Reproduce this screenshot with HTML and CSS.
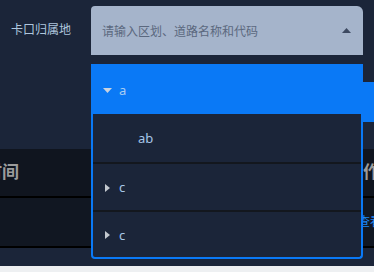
FILE: index.html
```html
<!DOCTYPE html>
<html lang="zh-CN">
<head>
    <meta charset="UTF-8">
    <title>卡口查询</title>
    <link rel="stylesheet" href="styles.css">
</head>
<body>
    <div class="page">
        <div class="filter">
            <div class="filter-label">卡口归属地</div>
            <div class="select">
                <span class="placeholder">请输入区划、道路名称和代码</span>
                <svg class="arrow" width="9" height="5" viewBox="0 0 9 5"><polygon points="0,5 4.5,0 9,5" fill="#3c4961"/></svg>
            </div>
        </div>

        <div class="table">
            <div class="thead">
                <div class="th th-time">时间</div>
                <div class="th th-op">操作</div>
            </div>
            <div class="tr">
                <div class="td"></div>
                <div class="td td-op">查看</div>
            </div>
        </div>
        <div class="footer"></div>

        <!-- button peeking out from behind the dropdown -->
        <div class="side-btn"></div>

        <!-- tree dropdown -->
        <div class="dropdown">
            <div class="node node-open">
                <svg class="caret" width="9" height="5" viewBox="0 0 9 5"><polygon points="0,0 9,0 4.5,5" fill="#c9d2de"/></svg>
                <span class="node-text">a</span>
            </div>
            <div class="node node-child">
                <span class="node-text">ab</span>
            </div>
            <div class="node node-sep">
                <svg class="caret caret-right" width="5" height="8" viewBox="0 0 5 8"><polygon points="0,0 5,4 0,8" fill="#c3c8cf"/></svg>
                <span class="node-text">c</span>
            </div>
            <div class="node node-sep node-last">
                <svg class="caret caret-right" width="5" height="8" viewBox="0 0 5 8"><polygon points="0,0 5,4 0,8" fill="#c3c8cf"/></svg>
                <span class="node-text">c</span>
            </div>
        </div>
    </div>
</body>
</html>
```

FILE: styles.css
```css
* {
    box-sizing: border-box;
}
body {
    margin: 0;
    background: #1b2539;
    font-family: "Noto Sans", "Noto Sans CJK SC", sans-serif;
    overflow: hidden;
}
.page {
    position: relative;
    width: 374px;
    height: 272px;
    overflow: hidden;
}
.filter {
    display: flex;
    align-items: center;
    padding-top: 6px;
}
.filter-label {
    width: 91px;
    padding-left: 11px;
    font-size: 12px;
    color: #aec6de;
    margin-top: -3px;
}
.select {
    width: 272px;
    height: 49px;
    background: #a5b4cb;
    border-radius: 4px 6px 0 0;
    display: flex;
    align-items: center;
    justify-content: space-between;
    padding: 0 12px 0 11px;
}
.placeholder {
    font-size: 12px;
    color: #5b687e;
}
.arrow {
    margin-top: -1px;
}
.table {
    margin-top: 94px;
}
.thead {
    display: flex;
    justify-content: space-between;
    height: 49px;
    background: #10151f;
    border-bottom: 2px solid #000;
}
.th {
    font-size: 17px;
    font-weight: bold;
    color: #9c9c9c;
    line-height: 45px;
}
.th-time {
    margin-left: -15px;
}
.th-op {
    margin-right: -6px;
}
.tr {
    display: flex;
    justify-content: space-between;
    height: 50px;
    background: #111722;
    border-bottom: 2px solid #000;
}
.td-op {
    font-size: 12px;
    color: #1e86f0;
    line-height: 48px;
    margin-right: -8px;
}
.footer {
    margin-top: 18px;
    height: 6px;
    background: #eef0f2;
}
.side-btn {
    position: absolute;
    left: 355px;
    top: 82px;
    width: 19px;
    height: 40px;
    background: #0a79f6;
}
.dropdown {
    position: absolute;
    left: 91px;
    top: 64px;
    width: 272px;
    height: 195px;
    background: #1b2539;
    border: 2px solid #0a79f6;
    border-top: none;
    border-radius: 0 0 4px 4px;
}
.node {
    display: flex;
    align-items: center;
    height: 48px;
    padding-left: 10px;
    padding-top: 1px;
    font-size: 13px;
    color: #a6c6e8;
}
.node-open {
    height: 50px;
    margin: 0 -2px;
    padding-left: 12px;
    padding-top: 2px;
    background: #0a79f6;
    color: #a9cdf2;
}
.node-child {
    padding-left: 45px;
}
.node-sep {
    border-top: 2px solid #13171e;
}
.node-last {
    height: 47px;
}
.caret {
    margin-right: 7px;
}
.caret-right {
    margin-left: 2px;
    margin-right: 9px;
}
.node-text {
    line-height: 1;
}
```
